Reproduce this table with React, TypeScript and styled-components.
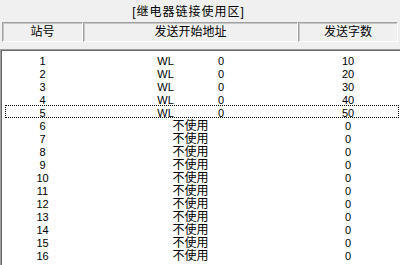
import styled, { createGlobalStyle } from 'styled-components';

interface StationRow {
  station: number;
  device?: string;
  address?: number;
  words: number;
}

const rows: StationRow[] = Array.from({ length: 16 }, (_, i) =>
  i < 5
    ? { station: i + 1, device: 'WL', address: 0, words: (i + 1) * 10 }
    : { station: i + 1, words: 0 }
);

const GlobalStyle = createGlobalStyle`
  html, body {
    margin: 0;
    padding: 0;
    background: #f0f0f0;
  }
  body {
    font-family: "Liberation Sans", "Noto Sans CJK SC", sans-serif;
    color: #000;
  }
`;

const Panel = styled.div`
  width: 400px;
  height: 265px;
  overflow: hidden;
  display: flex;
  flex-direction: column;
  background: #f0f0f0;
`;

const Title = styled.div`
  height: 22px;
  line-height: 25px;
  padding-right: 23px;
  text-align: center;
  font-size: 12px;
  letter-spacing: 1px;
`;

const Header = styled.div`
  display: grid;
  grid-template-columns: 81px 215px 100px;
  margin-left: 2px;
  height: 20px;
`;

const HeaderCell = styled.div`
  border-style: solid;
  border-width: 1px;
  border-color: #a0a0a0 #ffffff #ffffff #a0a0a0;
  box-shadow: inset 1px 1px 0 #c8c8c8;
  font-size: 12px;
  line-height: 18px;
  text-align: center;
`;

const List = styled.div`
  flex: 1;
  margin-top: 7px;
  background: #ffffff;
  border-top: 1px solid #a0a0a0;
  border-left: 1px solid #a0a0a0;
  box-shadow: inset 1px 1px 0 #696969;
  padding: 3px 0 0 1px;
`;

const Row = styled.div<{ $focused?: boolean }>`
  position: relative;
  display: grid;
  grid-template-columns: 81px 215px 100px;
  height: 13px;
  line-height: 16px;
  font-size: 11px;

  &::after {
    content: '';
    display: ${(p) => (p.$focused ? 'block' : 'none')};
    position: absolute;
    left: 3px;
    right: 1px;
    top: 0;
    bottom: 0;
    border: 1px dotted #000;
  }
`;

const Cell = styled.div`
  text-align: center;
  white-space: nowrap;
`;

/* device + start address share the wide column as two sub-columns */
const AddressCell = styled.div`
  display: grid;
  grid-template-columns: 55px 55px 56px 1fr;
  white-space: nowrap;
`;

const Unused = styled.div`
  grid-column: 1 / -1;
  text-align: center;
  font-size: 12px;
`;

export default function App() {
  return (
    <Panel>
      <GlobalStyle />
      <Title>[继电器链接使用区]</Title>
      <Header>
        <HeaderCell>站号</HeaderCell>
        <HeaderCell>发送开始地址</HeaderCell>
        <HeaderCell>发送字数</HeaderCell>
      </Header>
      <List>
        {rows.map((r) => (
          <Row key={r.station} $focused={r.station === 5}>
            <Cell>{r.station}</Cell>
            <AddressCell>
              {r.device ? (
                <>
                  <span />
                  <Cell>{r.device}</Cell>
                  <Cell>{r.address}</Cell>
                </>
              ) : (
                <Unused>不使用</Unused>
              )}
            </AddressCell>
            <Cell>{r.words}</Cell>
          </Row>
        ))}
      </List>
    </Panel>
  );
}
